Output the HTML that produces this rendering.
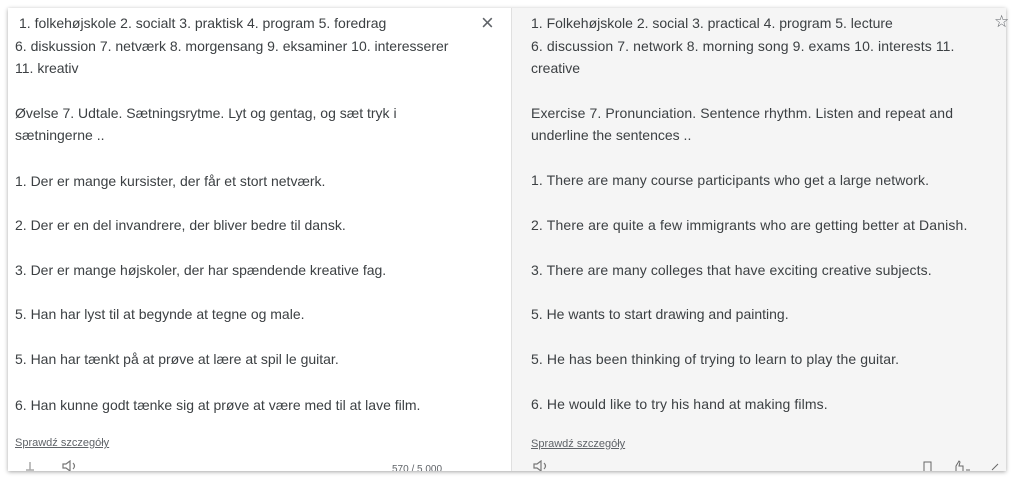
<!DOCTYPE html><html><head><style>
body{margin:0;width:1014px;height:480px;background:#fff;position:relative;overflow:hidden;font-family:"Liberation Sans",Roboto,sans-serif;}
.card{position:absolute;left:8px;top:8px;width:998px;height:463px;background:#fff;box-shadow:0 1px 4px rgba(0,0,0,.35);overflow:hidden}
.r{position:absolute;left:503px;top:0;width:495px;height:463px;background:#f5f5f5;border-left:1px solid #e0e0e0}
.t{position:absolute;font-size:14px;color:#3c4043;white-space:nowrap;line-height:20px}
.l{position:absolute;font-size:11px;color:#5f6368;text-decoration:underline}
svg{position:absolute}
</style></head><body><div class="card"><div class="r"></div>
<div class="t" style="left:11px;top:5px">1. folkehøjskole 2. socialt 3. praktisk 4. program 5. foredrag</div>
<div class="t" style="left:7px;top:28px">6. diskussion 7. netværk 8. morgensang 9. eksaminer 10. interesserer</div>
<div class="t" style="left:7px;top:50px">11. kreativ</div>
<div class="t" style="left:7px;top:95px">Øvelse 7. Udtale. Sætningsrytme. Lyt og gentag, og sæt tryk i</div>
<div class="t" style="left:7px;top:117px">sætningerne ..</div>
<div class="t" style="left:7px;top:163px">1. Der er mange kursister, der får et stort netværk.</div>
<div class="t" style="left:7px;top:207px">2. Der er en del invandrere, der bliver bedre til dansk.</div>
<div class="t" style="left:7px;top:252px">3. Der er mange højskoler, der har spændende kreative fag.</div>
<div class="t" style="left:7px;top:296px">5. Han har lyst til at begynde at tegne og male.</div>
<div class="t" style="left:7px;top:341px">5. Han har tænkt på at prøve at lære at spil le guitar.</div>
<div class="t" style="left:7px;top:387px">6. Han kunne godt tænke sig at prøve at være med til at lave film.</div>
<div class="l" style="left:7px;top:429px">Sprawdź szczegóły</div>
<div class="t" style="left:473px;top:5px;font-size:22px;color:#5f6368">×</div>
<svg style="left:12px;top:452px" width="70" height="12"><path d="M10 2v8M6 10h8" stroke="#aaa" stroke-width="1.5" fill="none"/><path d="M43 4h3l4-3v10l-4-3h-3z M53 3q3 3 0 6" stroke="#777" stroke-width="1.2" fill="none"/></svg>
<div class="t" style="left:384px;top:452px;font-size:10px;color:#5f6368">570 / 5 000</div>
<div class="t" style="left:523px;top:5px">1. Folkehøjskole 2. social 3. practical 4. program 5. lecture</div>
<div class="t" style="left:523px;top:28px;letter-spacing:0.1px">6. discussion 7. network 8. morning song 9. exams 10. interests 11.</div>
<div class="t" style="left:523px;top:50px">creative</div>
<div class="t" style="left:523px;top:95px;letter-spacing:0.1px">Exercise 7. Pronunciation. Sentence rhythm. Listen and repeat and</div>
<div class="t" style="left:523px;top:117px">underline the sentences ..</div>
<div class="t" style="left:523px;top:162px;letter-spacing:0.1px">1. There are many course participants who get a large network.</div>
<div class="t" style="left:523px;top:207px;letter-spacing:0.15px">2. There are quite a few immigrants who are getting better at Danish.</div>
<div class="t" style="left:523px;top:252px;letter-spacing:0.1px">3. There are many colleges that have exciting creative subjects.</div>
<div class="t" style="left:523px;top:296px">5. He wants to start drawing and painting.</div>
<div class="t" style="left:523px;top:341px;letter-spacing:0.1px">5. He has been thinking of trying to learn to play the guitar.</div>
<div class="t" style="left:523px;top:386px;letter-spacing:0.1px">6. He would like to try his hand at making films.</div>
<div class="l" style="left:523px;top:430px">Sprawdź szczegóły</div>
<svg style="left:522px;top:452px" width="470" height="12"><path d="M4 4h3l4-3v10l-4-3h-3z M14 3q3 3 0 6" stroke="#777" stroke-width="1.2" fill="none"/><rect x="394" y="2" width="7" height="10" stroke="#666" fill="none"/><path d="M426 12v-6l3-5 1 1-1 4h4v7" stroke="#666" fill="none"/><path d="M436 10h4" stroke="#666"/><path d="M462 10l6-6" stroke="#666"/></svg>
</div>
<div class="t" style="left:994px;top:12px;font-size:17px;color:#5f6368">☆</div>
</body></html>
